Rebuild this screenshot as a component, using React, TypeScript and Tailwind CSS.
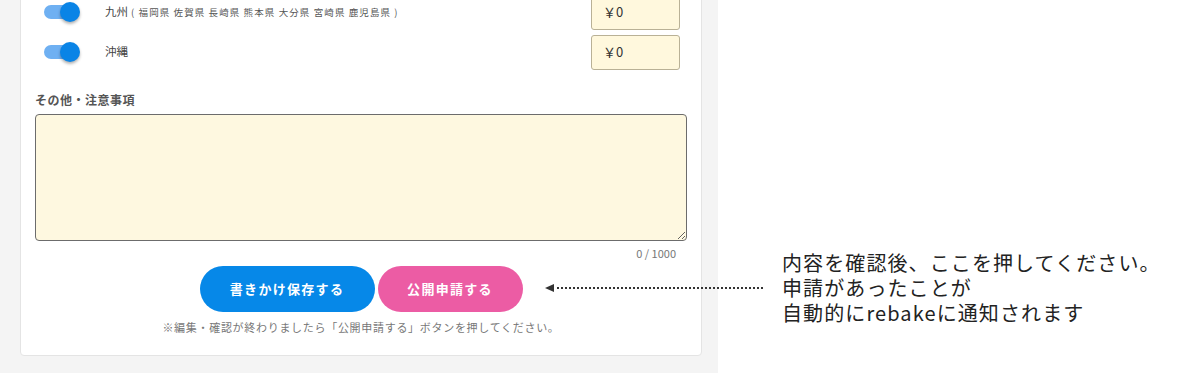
import React from 'react';

const REGIONS = [
  { name: '九州', sub: '( 福岡県 佐賀県 長崎県 熊本県 大分県 宮崎県 鹿児島県 )' },
  { name: '沖縄', sub: '' },
];

function Toggle() {
  return (
    <div className="relative w-[36px] h-[20px] flex items-center">
      <div className="w-[32px] h-[14px] rounded-full bg-[#6fb0f2]" />
      <div className="absolute right-0 top-0 w-[20px] h-[20px] rounded-full bg-[#0a84e6] shadow-[0_2px_3px_rgba(0,0,0,0.3)]" />
    </div>
  );
}

export default function App() {
  return (
    <div
      className="flex w-[1200px] h-[373px] overflow-hidden bg-white text-[#333]"
      style={{ fontFamily: '"Noto Sans CJK JP", "Noto Sans", sans-serif' }}
    >
      {/* Left form panel */}
      <div className="relative w-[718px] h-full shrink-0 bg-[#f4f4f4] pl-[20px] pr-[16px]">
        <div className="mt-[-9px] bg-white border border-[#e4e4e4] rounded-[4px] px-[14px] pb-[8px]">
          {REGIONS.map((r) => (
            <div key={r.name} className="h-[40px] flex items-center">
              <div className="ml-[9px] w-[36px]">
                <Toggle />
              </div>
              <div className="ml-[25px] flex-1 flex items-baseline text-[#444]">
                <span className="text-[11.5px]">{r.name}</span>
                {r.sub && (
                  <span className="ml-[3px] text-[9.5px] tracking-[1.1px] text-[#555]">{r.sub}</span>
                )}
              </div>
              <div className="mr-[7px] w-[89px] h-[35px] rounded-[3px] border border-[#b9b196] bg-[#fff8dd] flex items-center pl-[11px] text-[13px] text-[#333]">
                ￥0
              </div>
            </div>
          ))}

          <div className="mt-[19px] text-[12px] font-bold tracking-[0.5px] text-[#555] leading-[18px]">
            その他・注意事項
          </div>
          <textarea
            className="mt-[5px] block w-full h-[127px] rounded-[4px] border-[1.5px] border-[#6c6c6c] bg-[#fef8e0] outline-none"
            defaultValue=""
          />
          <div className="mt-[5px] pr-[11px] text-right text-[11px] text-[#777] leading-[14px]">0 / 1000</div>

          <div className="mt-[6px] flex justify-center gap-[3px]">
            <button className="w-[175px] h-[46px] rounded-full bg-[#0688e8] text-white text-[13px] font-bold tracking-[1.3px]">
              書きかけ保存する
            </button>
            <button className="w-[145px] h-[46px] rounded-full bg-[#ec5ca4] text-white text-[13px] font-bold tracking-[1.3px]">
              公開申請する
            </button>
          </div>
          <p className="mt-[7px] mb-[12px] text-center text-[11px] tracking-[0.7px] text-[#777] leading-[16px]">
            ※編集・確認が終わりましたら「公開申請する」ボタンを押してください。
          </p>
        </div>
      </div>

      {/* Annotation */}
      <div className="pl-[64px] pt-[250px] text-[20px] tracking-[1.1px] leading-[25px] text-[#222]">
        <p>内容を確認後、ここを押してください。</p>
        <p>申請があったことが</p>
        <p>自動的にrebakeに通知されます</p>
      </div>

      {/* Dotted arrow overlay */}
      <svg className="absolute left-[540px] top-[282px]" width="230" height="12" viewBox="0 0 230 12">
        <path d="M5 6 L14 2 L14 10 Z" fill="#333" />
        <line x1="17" y1="6" x2="223" y2="6" stroke="#333" strokeWidth="2.2" strokeDasharray="2 2" />
      </svg>
    </div>
  );
}
